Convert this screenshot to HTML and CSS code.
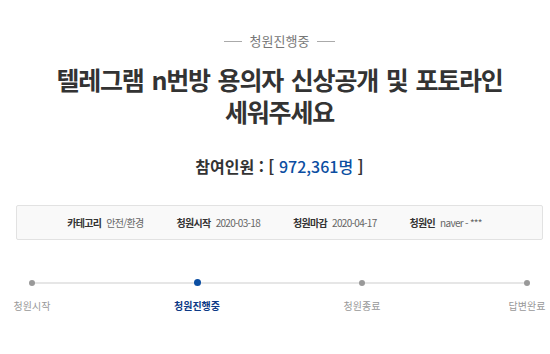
FILE: index.html
```html
<!DOCTYPE html>
<html lang="ko">
<head>
    <meta charset="UTF-8">
    <meta name="viewport" content="width=device-width, initial-scale=1.0">
    <title>청원진행중</title>
    <link rel="stylesheet" href="styles.css">
</head>
<body>
    <div class="petition">
        <div class="status"><span class="status-text">청원진행중</span></div>
        <h1 class="title">
            <span class="title-line">텔레그램 n번방 용의자 신상공개 및 포토라인</span>
            <span class="title-line">세워주세요</span>
        </h1>
        <p class="count">참여인원 : [ <span class="count-num">972,361명</span> ]</p>
        <ul class="info">
            <li><b>카테고리</b> 안전/환경</li>
            <li><b>청원시작</b> 2020-03-18</li>
            <li><b>청원마감</b> 2020-04-17</li>
            <li><b>청원인</b> naver - ***</li>
        </ul>
        <ol class="steps">
            <li class="step"><span class="dot"></span><span class="label">청원시작</span></li>
            <li class="step active"><span class="dot"></span><span class="label">청원진행중</span></li>
            <li class="step"><span class="dot"></span><span class="label">청원종료</span></li>
            <li class="step"><span class="dot"></span><span class="label">답변완료</span></li>
        </ol>
    </div>
</body>
</html>
```

FILE: styles.css
```css
body {
    margin: 0;
    background: #fff;
    font-family: 'Noto Sans CJK KR', 'Noto Sans', sans-serif;
    color: #333;
}

.petition {
    padding: 32px 7px 0 16px;
}

.status {
    display: flex;
    justify-content: center;
    align-items: center;
    gap: 8px;
    font-size: 13px;
    line-height: 18px;
    color: #777;
}

.status::before,
.status::after {
    content: '';
    width: 18px;
    height: 1px;
    background: #aaa;
}

.title {
    margin: 13px 0 0;
    display: flex;
    flex-direction: column;
    align-items: center;
    font-size: 25px;
    line-height: 32px;
    font-weight: bold;
    letter-spacing: -1.2px;
    word-spacing: 2px;
    color: #333;
}

.title-line {
    display: block;
    height: 32px;
}

.count {
    margin: 27px 0 0;
    text-align: center;
    font-size: 16px;
    line-height: 24px;
    font-weight: bold;
    color: #333;
}

.count-num {
    color: #0b4ea2;
    font-weight: 500;
}

.info {
    list-style: none;
    margin: 27px 0 0;
    padding: 0 10px 0 0;
    height: 33px;
    display: flex;
    justify-content: center;
    align-items: center;
    gap: 33px;
    background: #f9f9f9;
    border: 1px solid #e2e2e2;
    border-radius: 2px;
    font-size: 10px;
    color: #666;
    letter-spacing: -0.7px;
}

.info b {
    color: #333;
    margin-right: 3px;
}

.steps {
    list-style: none;
    margin: 39px 16px 0;
    padding: 0;
    display: flex;
    justify-content: space-between;
    background: linear-gradient(#e6e6e6, #e6e6e6) no-repeat 0 3px / 100% 2px;
}

.step {
    width: 0;
    display: flex;
    flex-direction: column;
    align-items: center;
}

.dot {
    width: 6px;
    height: 6px;
    margin-top: 1px;
    border-radius: 50%;
    background: #999;
}

.label {
    margin-top: 12px;
    white-space: nowrap;
    font-size: 10px;
    line-height: 16px;
    color: #999;
}

.step.active .dot {
    width: 7px;
    height: 7px;
    margin-top: 0;
    background: #0b4ea2;
}

.step.active .label {
    margin-top: 12px;
    font-weight: bold;
    color: #0d3a86;
}
```
